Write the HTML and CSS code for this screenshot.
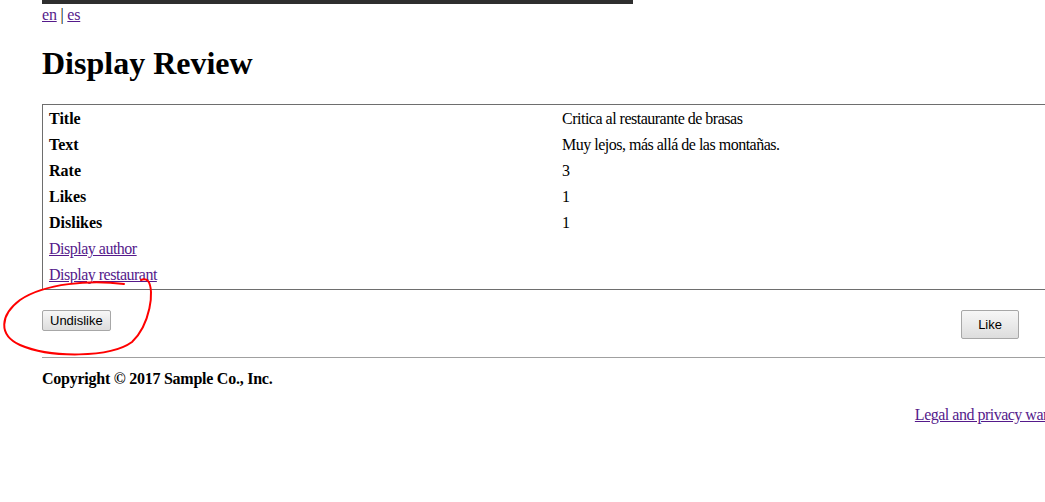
FILE: index.html
```html
<!DOCTYPE html>
<html>
<head>
<meta charset="utf-8">
<title>Display Review</title>
<link rel="stylesheet" href="styles.css">
</head>
<body>
<div class="page">
  <div class="banner"></div>
  <div class="lang"><a href="#">en</a> | <a href="#">es</a></div>
  <h1 class="title">Display Review</h1>
  <table class="details">
    <tr><th>Title</th><td>Critica al restaurante de brasas</td></tr>
    <tr><th>Text</th><td>Muy lejos, más allá de las montañas.</td></tr>
    <tr><th>Rate</th><td>3</td></tr>
    <tr><th>Likes</th><td>1</td></tr>
    <tr><th>Dislikes</th><td>1</td></tr>
    <tr><td colspan="2"><a href="#">Display author</a></td></tr>
    <tr><td colspan="2"><a href="#">Display restaurant</a></td></tr>
  </table>
  <div class="actions">
    <button class="btn btn-small">Undislike</button>
    <button class="btn btn-big">Like</button>
  </div>
  <hr class="sep">
  <div class="copy">Copyright © 2017 Sample Co., Inc.</div>
  <div class="legal"><a href="#">Legal and privacy warranties</a></div>
</div>
<svg class="mark" width="170" height="100" viewBox="0 0 170 100">
  <path d="M124,14 C90,10 45,13 20,30 C0,45 -2,65 20,75 C50,88 110,88 132,72 C150,55 155,20 148,11 C146,9 143,9 141,10" fill="none" stroke="#f00" stroke-width="2" stroke-linecap="round"/>
</svg>
</body>
</html>
```
FILE: styles.css
```css
html, body {
  margin: 0;
  padding: 0;
  overflow: hidden;
  background: #fff;
}
body {
  font-family: "Liberation Serif", "Times New Roman", serif;
  font-size: 16px;
  color: #000;
  position: relative;
}
a {
  color: #551a8b;
}
.page {
  width: 1030px;
  margin-left: 42px;
}
.banner {
  width: 591px;
  height: 4px;
  background: #2e2e2e;
}
.lang {
  line-height: 18px;
  padding-top: 2px;
  letter-spacing: -0.2px;
}
.title {
  font-size: 32px;
  font-weight: bold;
  margin: 21px 0 23px;
  line-height: 36px;
}
.details {
  width: 1030px;
  border: 1px solid #6e6e6e;
  border-spacing: 2px;
}
.details th, .details td {
  padding: 3px 4px;
  text-align: left;
  line-height: 18px;
  vertical-align: top;
}
.details td {
  letter-spacing: -0.5px;
}
.details th {
  width: 50%;
}
.actions {
  display: flex;
  justify-content: space-between;
  align-items: flex-start;
  margin-top: 20px;
  padding-right: 53px;
}
.btn {
  font-family: "Liberation Sans", Arial, sans-serif;
  font-size: 13px;
  line-height: 15px;
  color: #000;
  background: linear-gradient(#f7f7f7, #dddddd);
  border: 1px solid #a7a7a7;
  border-radius: 2px;
  margin: 0;
}
.btn-small {
  padding: 2px 7px;
}
.btn-big {
  padding: 6px 16px;
}
.sep {
  margin: 18px 0 0;
  border: 0;
  border-top: 1px solid #a0a0a0;
  height: 0;
}
.copy {
  font-weight: bold;
  margin-top: 12px;
  line-height: 18px;
  letter-spacing: -0.25px;
}
.legal {
  text-align: right;
  margin-top: 18px;
  margin-right: -15px;
  line-height: 18px;
  letter-spacing: -0.5px;
}
.mark {
  position: absolute;
  left: 0;
  top: 270px;
}
```
